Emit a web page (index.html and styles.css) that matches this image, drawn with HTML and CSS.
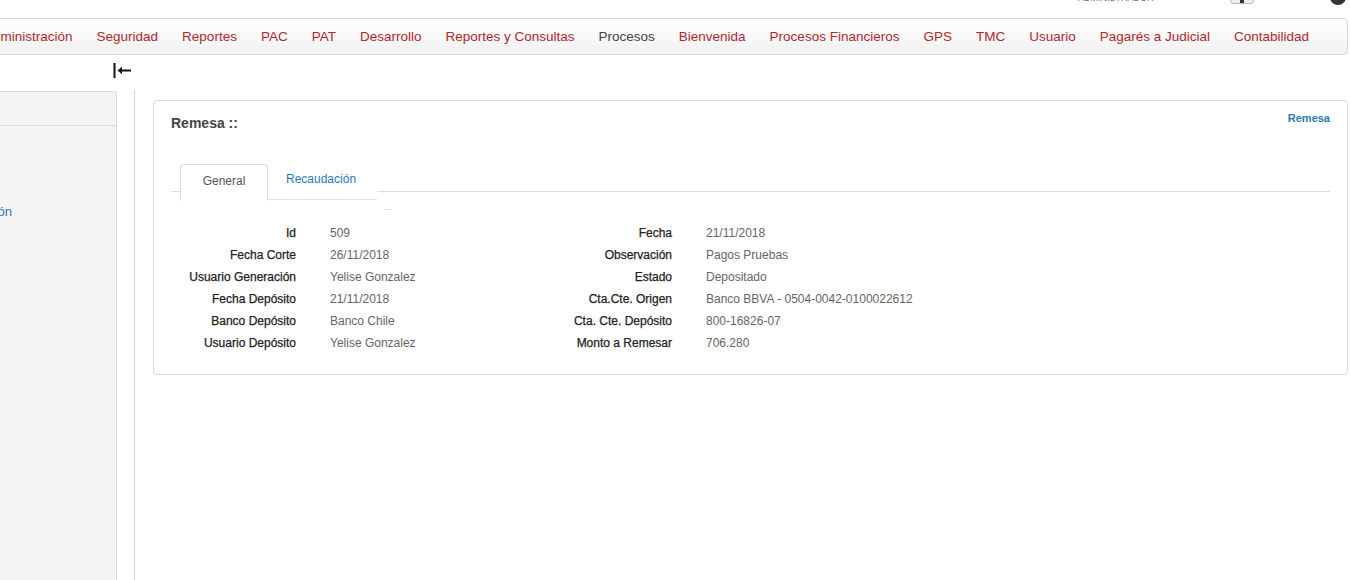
FILE: index.html
```html
<!DOCTYPE html>
<html lang="es">
<head>
<meta charset="utf-8">
<title>Remesa</title>
<link rel="stylesheet" href="styles.css">
</head>
<body>
<div class="topbar">
  <span class="user-role">ADMINISTRADOR</span>
  <span class="user-btn"><span class="user-btn-dot"></span></span>
  <span class="user-circle"></span>
</div>
<nav class="menu">
  <ul class="menu-list">
    <li class="menu-item">Administración</li>
    <li class="menu-item">Seguridad</li>
    <li class="menu-item">Reportes</li>
    <li class="menu-item">PAC</li>
    <li class="menu-item">PAT</li>
    <li class="menu-item">Desarrollo</li>
    <li class="menu-item">Reportes y Consultas</li>
    <li class="menu-item menu-item-current">Procesos</li>
    <li class="menu-item">Bienvenida</li>
    <li class="menu-item">Procesos Financieros</li>
    <li class="menu-item">GPS</li>
    <li class="menu-item">TMC</li>
    <li class="menu-item">Usuario</li>
    <li class="menu-item">Pagarés a Judicial</li>
    <li class="menu-item">Contabilidad</li>
  </ul>
</nav>
<div class="toolbar">
  <svg class="collapse-icon" width="18" height="15" viewBox="0 0 18 15" aria-hidden="true">
    <rect x="0.5" y="0" width="2" height="15" fill="#111"/>
    <rect x="6" y="6.5" width="12" height="2" fill="#111"/>
    <path d="M4.5 7.5 L9 3.8 L9 11.2 Z" fill="#111"/>
  </svg>
</div>
<div class="content">
  <aside class="sidebar">
    <div class="sidebar-head"></div>
    <div class="sidebar-body">
      <a class="sidebar-link">Recaudación</a>
    </div>
  </aside>
  <div class="separator"></div>
  <main class="panel">
    <div class="panel-head">
      <h2 class="panel-title">Remesa ::</h2>
      <a class="panel-crumb">Remesa</a>
    </div>
    <div class="tabs">
      <ul class="tab-list">
        <li class="tab tab-active">General</li>
        <li class="tab tab-link">Recaudación</li>
        <li class="tab-gap"></li>
      </ul>
      <div class="tab-body">
        <div class="field-grid">
          <div class="f-label">Id</div><div class="f-value">509</div>
          <div class="f-label">Fecha</div><div class="f-value">21/11/2018</div>
          <div class="f-label">Fecha Corte</div><div class="f-value">26/11/2018</div>
          <div class="f-label">Observación</div><div class="f-value">Pagos Pruebas</div>
          <div class="f-label">Usuario Generación</div><div class="f-value">Yelise Gonzalez</div>
          <div class="f-label">Estado</div><div class="f-value">Depositado</div>
          <div class="f-label">Fecha Depósito</div><div class="f-value">21/11/2018</div>
          <div class="f-label">Cta.Cte. Origen</div><div class="f-value">Banco BBVA - 0504-0042-0100022612</div>
          <div class="f-label">Banco Depósito</div><div class="f-value">Banco Chile</div>
          <div class="f-label">Cta. Cte. Depósito</div><div class="f-value">800-16826-07</div>
          <div class="f-label">Usuario Depósito</div><div class="f-value">Yelise Gonzalez</div>
          <div class="f-label">Monto a Remesar</div><div class="f-value">706.280</div>
        </div>
      </div>
    </div>
  </main>
</div>
</body>
</html>
```
FILE: styles.css
```css
* { box-sizing: border-box; }
html, body { margin: 0; padding: 0; }
body {
  font-family: "Liberation Sans", Arial, sans-serif;
  background: #fff;
  color: #333;
  overflow: hidden;
  height: 580px;
}

/* top strip (cut off) */
.topbar {
  height: 18px;
  display: flex;
  align-items: flex-start;
  overflow: hidden;
}
.user-role {
  margin-left: 1078px;
  margin-top: -7px;
  width: 152px;
  flex: none;
  font-size: 9px;
  line-height: 11px;
  color: #777;
}
.user-btn {
  flex: none;
  margin-top: -10px;
  width: 24px;
  height: 14px;
  border: 1px solid #bbb;
  border-radius: 3px;
  background: #eee;
  display: flex;
  justify-content: center;
  align-items: flex-end;
}
.user-btn-dot { width: 4px; height: 5px; background: #333; }
.user-circle {
  flex: none;
  margin-left: 76px;
  margin-top: -11px;
  width: 16px;
  height: 16px;
  border-radius: 50%;
  background: #333;
}

/* main menu */
.menu {
  margin-left: -29px;
  margin-right: 2px;
  height: 37px;
  border: 1px solid #d9d9d9;
  border-radius: 0 4px 4px 0;
  background: linear-gradient(#ffffff, #f1f1f1);
}
.menu-list {
  list-style: none;
  margin: 0;
  padding: 0;
  display: flex;
}
.menu-item {
  padding: 0 12px;
  line-height: 35px;
  font-size: 13.5px;
  color: #b0282d;
  white-space: nowrap;
}
.menu-item-current { color: #444; }

/* toolbar */
.toolbar {
  height: 36px;
  padding-top: 8px;
  padding-left: 113px;
}
.collapse-icon { display: block; }

/* content */
.content {
  display: flex;
  height: 489px;
}
.sidebar {
  margin-left: -20px;
  width: 137px;
  flex: none;
  background: #f4f4f4;
  border: 1px solid #dcdcdc;
  border-bottom: none;
  border-radius: 0 4px 0 0;
}
.sidebar-head {
  height: 34px;
  border-bottom: 1px solid #dcdcdc;
}
.sidebar-body { padding-top: 78px; }
.sidebar-link {
  display: block;
  margin-left: -45px;
  font-size: 13px;
  line-height: 16px;
  color: #2a7ab8;
  white-space: nowrap;
}
.separator {
  margin-left: 17px;
  width: 1px;
  flex: none;
  background: #d6d6d6;
  margin-top: -1px;
}
.panel {
  flex: 1;
  margin-left: 18px;
  margin-right: 2px;
  margin-top: 9px;
  height: 275px;
  border: 1px solid #dcdcdc;
  border-radius: 4px;
  background: #fff;
  padding: 0 17px;
}
.panel-head {
  display: flex;
  justify-content: space-between;
  align-items: flex-start;
}
.panel-title {
  margin: 13px 0 0 0;
  font-size: 14px;
  line-height: 18px;
  font-weight: bold;
  color: #444;
}
.panel-crumb {
  margin-top: 10px;
  font-size: 11px;
  line-height: 14px;
  font-weight: bold;
  color: #2a7ab8;
}

/* tabs */
.tabs { margin-top: 32px; }
.tab-list {
  list-style: none;
  margin: 0;
  padding: 0 0 0 9px;
  display: flex;
  align-items: flex-start;
  height: 28px;
  border-bottom: 1px solid #dcdcdc;
}
.tab {
  height: 37px;
  font-size: 12px;
  white-space: nowrap;
  background: #fff;
}
.tab-active {
  width: 88px;
  border: 1px solid #dcdcdc;
  border-bottom: none;
  border-radius: 4px 4px 0 0;
  color: #555;
  text-align: center;
  line-height: 33px;
}
.tab-link {
  width: 109px;
  padding-left: 18px;
  color: #2a7ab8;
  line-height: 31px;
  height: 36px;
  border-bottom: 1px solid #e2e2e2;
}
.tab-gap {
  width: 15px;
  height: 46px;
  display: flex;
  align-items: flex-end;
}
.tab-gap::after {
  content: "";
  display: block;
  margin-left: 8px;
  width: 7px;
  height: 1px;
  background: #e6e6e6;
}
.tab-body { padding-top: 30px; }

.field-grid {
  display: grid;
  grid-template-columns: 125px 251px 125px 1fr;
  grid-auto-rows: 22px;
  font-size: 12px;
  line-height: 22px;
}
.f-label {
  text-align: right;
  color: #222;
  -webkit-text-stroke: 0.25px #222;
  white-space: nowrap;
}
.f-value {
  padding-left: 34px;
  color: #666;
  white-space: nowrap;
}
```
